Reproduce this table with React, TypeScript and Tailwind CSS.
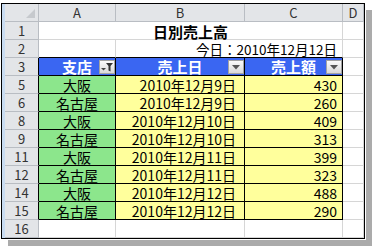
import React from "react";

const FONT = { fontFamily: '"Noto Sans CJK JP", "Noto Sans", sans-serif' };

type Row = { n: string; shop: string; date: string; amount: number };

const rows: Row[] = [
  { n: "5", shop: "大阪", date: "2010年12月9日", amount: 430 },
  { n: "6", shop: "名古屋", date: "2010年12月9日", amount: 260 },
  { n: "8", shop: "大阪", date: "2010年12月10日", amount: 409 },
  { n: "9", shop: "名古屋", date: "2010年12月10日", amount: 313 },
  { n: "11", shop: "大阪", date: "2010年12月11日", amount: 399 },
  { n: "12", shop: "名古屋", date: "2010年12月11日", amount: 323 },
  { n: "14", shop: "大阪", date: "2010年12月12日", amount: 488 },
  { n: "15", shop: "名古屋", date: "2010年12月12日", amount: 290 },
];

function DropButton({ filtered }: { filtered?: boolean }) {
  return (
    <div className="absolute right-0 top-[2px] w-[16px] h-[14px] border border-[#a3a3a3] bg-gradient-to-b from-[#fbfbfb] to-[#d9d9d9] flex items-center justify-center">
      {filtered ? (
        <svg width="12" height="9" viewBox="0 0 12 9">
          <polygon points="0,5 5,5 2.5,7.5" fill="#444" />
          <polygon points="5,0 12,0 9.5,3 9.5,8.5 7.5,7.5 7.5,3" fill="#333" />
        </svg>
      ) : (
        <svg width="8" height="5" viewBox="0 0 8 5">
          <polygon points="0,0 8,0 4,4.5" fill="#555" />
        </svg>
      )}
    </div>
  );
}

const hdr = "bg-[#e3e5e8] border-r border-b border-[#b9bdc3] flex items-center justify-center text-[13px] text-[#333]";
const grid = "border-r border-b border-[#d6d6d6]";
const tableHead =
  "relative border-r border-b border-black bg-[#3a66f2] text-white font-bold text-[15px] flex items-center justify-center";

export default function App() {
  return (
    <div className="w-[373px] h-[248px] bg-white overflow-hidden" style={FONT}>
      <div className="ml-[1px] mt-[3px] w-[364px] h-[236px] border border-black flex shadow-[0_0_0_1px_#fff,7px_7px_0_0_#ababab]">
        <div className="w-[3px] bg-[#c9dcf1]" />
        <div className="grid grid-cols-[34px_77px_129px_98px_21px] auto-rows-[18px] text-[14px] leading-[15px] text-black">
          {/* column headers */}
          <div className={`${hdr} relative`}>
            <svg className="absolute right-[3px] bottom-[3px]" width="9" height="9" viewBox="0 0 9 9">
              <polygon points="9,0 9,9 0,9" fill="#c6c9cd" />
            </svg>
          </div>
          <div className={hdr}>A</div>
          <div className={hdr}>B</div>
          <div className={hdr}>C</div>
          <div className={hdr}>D</div>

          {/* row 1: title */}
          <div className={`${hdr} text-[#222]`}>1</div>
          <div className={`col-span-3 ${grid} flex items-end justify-center text-[15px] font-bold`}>
            日別売上高
          </div>
          <div className={grid} />

          {/* row 2: today */}
          <div className={`${hdr} text-[#222]`}>2</div>
          <div className="border-r border-b border-r-[#d6d6d6] border-b-black" />
          <div className="col-span-2 border-r border-b border-r-[#d6d6d6] border-b-black flex items-end justify-end pr-[5px] text-[13.5px]">
            今日：2010年12月12日
          </div>
          <div className={grid} />

          {/* row 3: table header */}
          <div className={`${hdr} text-[#222] border-r-black`}>3</div>
          <div className={tableHead}>
            支店
            <DropButton filtered />
          </div>
          <div className={tableHead}>
            売上日
            <DropButton />
          </div>
          <div className={tableHead}>
            売上額
            <DropButton />
          </div>
          <div className={grid} />

          {rows.map((r) => (
            <React.Fragment key={r.n}>
              <div className={`${hdr} border-r-black text-[#0000ff]`}>{r.n}</div>
              <div className="border-r border-b border-black bg-[#8ce68c] flex items-center justify-center pt-[1px]">
                {r.shop}
              </div>
              <div className="border-r border-b border-black bg-[#ffff9c] flex items-center justify-end pr-[8px] pt-[1px]">
                {r.date}
              </div>
              <div className="border-r border-b border-black bg-[#ffff9c] flex items-center justify-end pr-[5px] pt-[1px]">
                {r.amount}
              </div>
              <div className={grid} />
            </React.Fragment>
          ))}

          {/* row 16: empty */}
          <div className={`${hdr} text-[#222]`}>16</div>
          <div className={grid} />
          <div className={grid} />
          <div className={grid} />
          <div className={grid} />
        </div>
      </div>
    </div>
  );
}
